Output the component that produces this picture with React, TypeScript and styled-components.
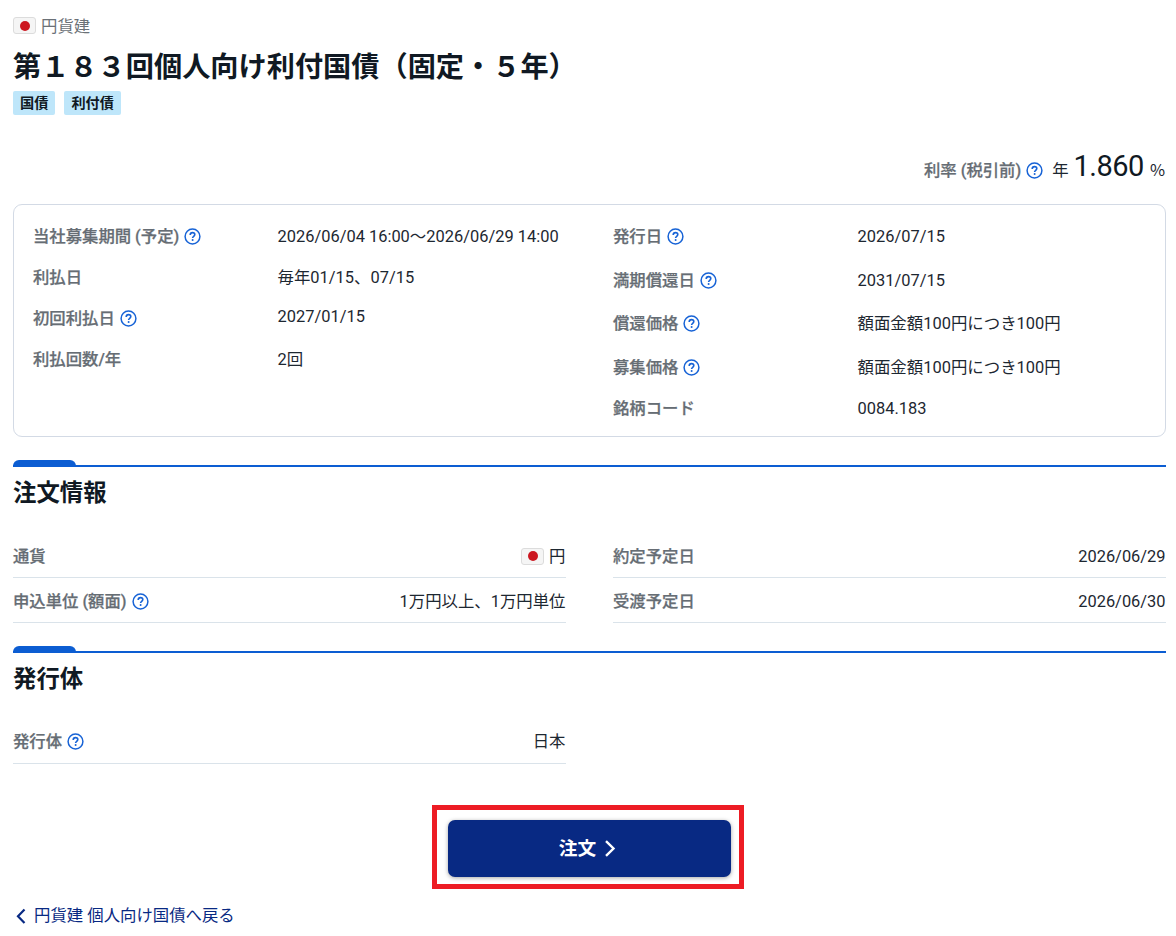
import React from "react";
import styled, { createGlobalStyle } from "styled-components";

const GlobalStyle = createGlobalStyle`
  *, *::before, *::after { box-sizing: border-box; }
  body {
    margin: 0;
    background: #fff;
    color: #1d2731;
    font-family: Roboto, "Noto Sans CJK JP", sans-serif;
    font-size: 16.4px;
    line-height: 24px;
  }
  h1, h2, p, dl, dt, dd { margin: 0; }
`;

const Page = styled.main`
  width: 1176px;
  height: 936px;
  padding: 14px 10px 0 13px;
  overflow: hidden;
  white-space: nowrap;
`;

const Currency = styled.p`
  display: flex;
  align-items: center;
  gap: 5px;
  height: 25px;
  color: #6b7177;
`;

const FlagBox = styled.span`
  display: flex;
  align-items: center;
  justify-content: center;
  width: 23px;
  height: 17px;
  margin-bottom: 2px;
  border: 1px solid #dcdcdc;
  border-radius: 3px;
  background: #f5f5f5;

  &::after {
    content: "";
    width: 10px;
    height: 10px;
    border-radius: 50%;
    background: #cc1720;
  }
`;

const Title = styled.h1`
  height: 52px;
  color: #101923;
  font-size: 28.2px;
  font-weight: 700;
  line-height: 57px;
`;

const Tags = styled.div`
  display: flex;
  gap: 9px;
`;

const Tag = styled.span`
  height: 24px;
  padding: 0 7px;
  border-radius: 2px;
  background: #bee6fa;
  color: #101923;
  font-size: 14.2px;
  font-weight: 700;
  line-height: 25px;
`;

const Rate = styled.div`
  display: flex;
  align-items: baseline;
  justify-content: flex-end;
  height: 55px;
  margin-top: 34px;
  padding-right: 1px;
`;

const RateUnit = styled.span`
  margin-left: 9px;
`;

const RateValue = styled.span`
  margin: 0 6px 0 5px;
  color: #101923;
  font-size: 29px;
  letter-spacing: -0.5px;
  line-height: 34px;
`;

const RatePercent = styled.span`
  font-family: "Noto Sans CJK JP", sans-serif;
`;

const LabelBox = styled.dt`
  display: flex;
  align-items: center;
  gap: 5px;
  height: 24px;
  color: #666d74;
  font-size: 16.35px;
  font-weight: 500;
  -webkit-text-stroke: 0.25px #666d74;
`;

const HelpSvg = styled.svg`
  display: block;
  flex: none;
  margin-bottom: 1px;
`;

const Summary = styled.section`
  display: flex;
  height: 233px;
  padding: 20px 0 0 19px;
  border: 1.5px solid #d3dae5;
  border-radius: 9px;
`;

const SummaryColumn = styled.dl`
  flex: 0 0 580px;
`;

const SummaryRow = styled.div<{ $height: number }>`
  display: grid;
  grid-template-columns: 244.5px 1fr;
  height: ${(p) => p.$height}px;
`;

const SummaryValue = styled.dd<{ $raised?: boolean }>`
  margin-top: ${(p) => (p.$raised ? -2 : 0)}px;
  font-size: 16.43px;
  line-height: 24.5px;
`;

const Section = styled.section`
  margin-top: 23px;
`;

const SectionRule = styled.div`
  height: 7px;
  border-bottom: 2px solid #0c5dd2;

  &::before {
    content: "";
    display: block;
    width: 63px;
    height: 6px;
    border-radius: 6px 6px 0 0;
    background: #0c5dd2;
  }
`;

const SectionTitle = styled.h2`
  height: 66px;
  color: #101923;
  font-size: 23.4px;
  font-weight: 700;
  line-height: 52px;
`;

const DetailGrid = styled.dl`
  display: grid;
  grid-template-columns: 552.5px 552.5px;
  column-gap: 47.5px;
`;

const DetailRow = styled.div<{ $top: number }>`
  display: flex;
  justify-content: space-between;
  height: 45px;
  padding-top: ${(p) => p.$top}px;
  border-bottom: 1px solid #dae3ea;
`;

const DetailValue = styled.dd`
  display: flex;
  align-items: center;
  gap: 5px;
  height: 24px;
`;

const OrderFrame = styled.div`
  width: 312px;
  height: 84px;
  margin: 41px 0 0 419px;
  padding: 10px 11px;
  border: 5px solid #ed1c24;
`;

const OrderButton = styled.button`
  display: flex;
  align-items: center;
  justify-content: center;
  gap: 8px;
  width: 283px;
  height: 57px;
  padding: 0 4px 0 0;
  border: 0;
  border-radius: 7px;
  background: #082983;
  box-shadow: 0 1px 4px rgba(0, 0, 0, 0.35);
  color: #fff;
  font: 700 18.7px/28px Roboto, "Noto Sans CJK JP", sans-serif;
`;

const BackLink = styled.a`
  display: flex;
  align-items: center;
  gap: 8px;
  height: 24px;
  margin: 15px 0 0 3px;
  color: #082983;
`;

const Flag = () => <FlagBox role="img" aria-label="日本" />;

const HelpIcon = () => (
  <HelpSvg width="17" height="17" viewBox="0 0 17 17" fill="none">
    <circle cx="8.5" cy="8.5" r="7.4" stroke="#1763d6" strokeWidth="1.5" />
    <path
      d="M6.2 6.9C6.2 5.4 7.1 4.6 8.5 4.6s2.3.8 2.3 2c0 1.8-2.2 1.8-2.2 3.5"
      stroke="#1763d6"
      strokeWidth="1.6"
    />
    <circle cx="8.6" cy="12" r="1" fill="#1763d6" />
  </HelpSvg>
);

const Label = ({ text, help }: { text: string; help?: boolean }) => (
  <LabelBox>
    {text}
    {help && <HelpIcon />}
  </LabelBox>
);

interface Item {
  label: string;
  value: React.ReactNode;
  help?: boolean;
  height?: number;
  raised?: boolean;
}

const summaryLeft: Item[] = [
  { label: "当社募集期間 (予定)", value: "2026/06/04 16:00～2026/06/29 14:00", help: true, height: 41 },
  { label: "利払日", value: "毎年01/15、07/15", height: 41 },
  { label: "初回利払日", value: "2027/01/15", help: true, height: 41, raised: true },
  { label: "利払回数/年", value: "2回", height: 41 },
];

const summaryRight: Item[] = [
  { label: "発行日", value: "2026/07/15", help: true, height: 43.5 },
  { label: "満期償還日", value: "2031/07/15", help: true, height: 43.5 },
  { label: "償還価格", value: "額面金額100円につき100円", help: true, height: 43.5 },
  { label: "募集価格", value: "額面金額100円につき100円", help: true, height: 41 },
  { label: "銘柄コード", value: "0084.183", height: 41 },
];

const orderItems: Item[] = [
  { label: "通貨", value: <><Flag />円</> },
  { label: "約定予定日", value: "2026/06/29" },
  { label: "申込単位 (額面)", value: "1万円以上、1万円単位", help: true },
  { label: "受渡予定日", value: "2026/06/30" },
];

const issuerItems: Item[] = [{ label: "発行体", value: "日本", help: true }];

const SummaryList = ({ items }: { items: Item[] }) => (
  <SummaryColumn>
    {items.map((item) => (
      <SummaryRow key={item.label} $height={item.height ?? 41}>
        <Label text={item.label} help={item.help} />
        <SummaryValue $raised={item.raised}>{item.value}</SummaryValue>
      </SummaryRow>
    ))}
  </SummaryColumn>
);

const DetailSection = ({ title, items, rowTop = 12 }: { title: string; items: Item[]; rowTop?: number }) => (
  <Section>
    <SectionRule />
    <SectionTitle>{title}</SectionTitle>
    <DetailGrid>
      {items.map((item) => (
        <DetailRow key={item.label} $top={rowTop}>
          <Label text={item.label} help={item.help} />
          <DetailValue>{item.value}</DetailValue>
        </DetailRow>
      ))}
    </DetailGrid>
  </Section>
);

export default function App() {
  return (
    <>
      <GlobalStyle />
      <Page lang="ja">
        <Currency>
          <Flag />
          円貨建
        </Currency>
        <Title>第１８３回個人向け利付国債（固定・５年）</Title>
        <Tags>
          <Tag>国債</Tag>
          <Tag>利付債</Tag>
        </Tags>
        <Rate>
          <Label text="利率 (税引前)" help />
          <RateUnit>年</RateUnit>
          <RateValue>1.860</RateValue>
          <RatePercent>%</RatePercent>
        </Rate>
        <Summary>
          <SummaryList items={summaryLeft} />
          <SummaryList items={summaryRight} />
        </Summary>
        <DetailSection title="注文情報" items={orderItems} />
        <DetailSection title="発行体" items={issuerItems} rowTop={11} />
        <OrderFrame>
          <OrderButton type="button">
            注文
            <svg width="12" height="18" viewBox="0 0 12 18" fill="none">
              <path d="M2 1.2l7.5 7.3L2 15.8" stroke="#fff" strokeWidth="2.4" />
            </svg>
          </OrderButton>
        </OrderFrame>
        <BackLink>
          <svg width="10" height="16" viewBox="0 0 10 16" fill="none">
            <path d="M8.5 1.6L2 8.3l6.5 6.6" stroke="#082983" strokeWidth="2.2" />
          </svg>
          円貨建 個人向け国債へ戻る
        </BackLink>
      </Page>
    </>
  );
}
